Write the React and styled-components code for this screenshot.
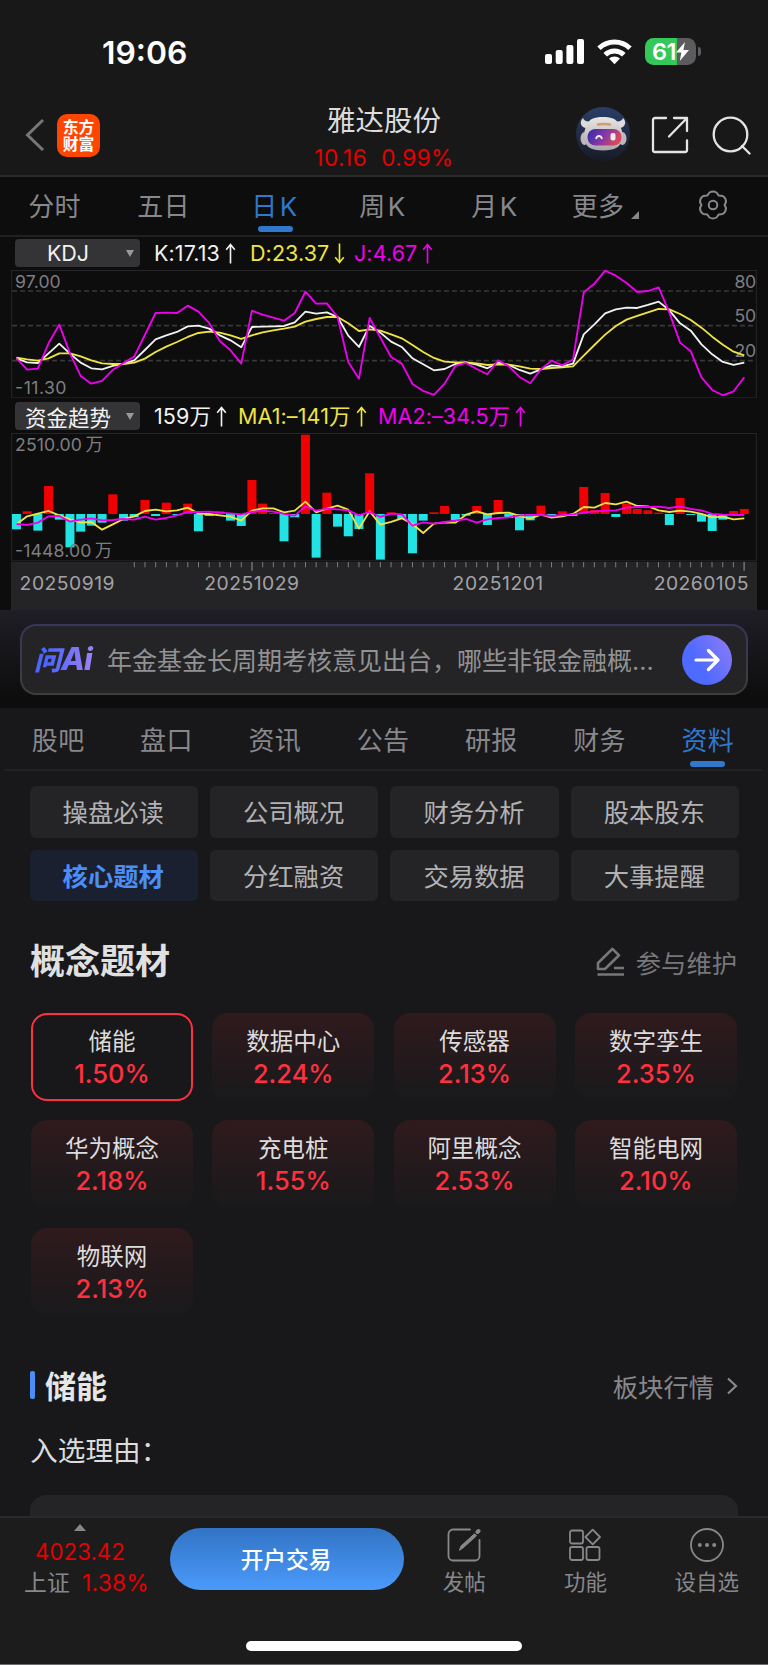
import React from 'react'
import styled, { createGlobalStyle, css } from 'styled-components'

const palette = {
    red: '#e60000',
    rose: '#ff3040',
    blue: '#2f78cc',
    brightBlue: '#4b8ef8',
    yellow: '#f0e442',
    pink: '#f000f0',
    cyan: '#22e3e3',
    grey: '#88888c',
    panel: '#242426',
}

// the charts use three units for each pixel
const STEP = 32.12
const FIRST = 16
const cx = i => FIRST + i * STEP

const kLine = [370, 382, 384, 355, 326, 356, 383, 400, 403, 393, 386, 376, 345, 313, 301, 291, 274, 272, 281, 301, 316, 337, 276, 275, 274, 273, 262, 230, 236, 232, 246, 302, 336, 272, 293, 320, 336, 370, 388, 406, 402, 387, 382, 389, 400, 383, 390, 405, 416, 403, 391, 394, 386, 298, 268, 235, 223, 218, 219, 210, 200, 226, 265, 287, 328, 358, 381, 390, 383]
const dLine = [368, 373, 377, 370, 355, 355, 364, 376, 385, 387, 387, 383, 371, 351, 335, 321, 306, 294, 290, 293, 301, 312, 301, 292, 286, 281, 275, 260, 252, 246, 246, 265, 288, 283, 287, 298, 310, 330, 351, 369, 380, 382, 382, 385, 390, 388, 389, 394, 401, 402, 399, 397, 394, 362, 330, 299, 273, 254, 243, 232, 222, 223, 237, 255, 278, 305, 329, 350, 361]
const jLine = [370, 404, 401, 325, 269, 355, 423, 446, 438, 405, 384, 365, 300, 234, 233, 234, 212, 230, 264, 318, 346, 386, 227, 239, 248, 257, 234, 170, 206, 205, 246, 381, 431, 249, 308, 366, 386, 447, 468, 480, 446, 393, 384, 402, 418, 376, 394, 426, 445, 403, 377, 391, 373, 172, 146, 107, 122, 144, 171, 168, 157, 233, 323, 349, 427, 465, 481, 469, 427]

const flows = [-46, 8, -50, 84, -17, -100, -53, -35, -26, 59, -20, -10, 42, -6, 34, -3, 31, -52, -6, 8, -20, -36, 102, 31, 3, -82, -10, 238, -131, 64, -38, -67, -45, 122, -137, 5, -15, -118, -20, 5, 24, -18, -5, 24, -33, 42, -12, -49, -19, 25, -3, 8, -6, 81, 12, 63, -9, 31, 15, 11, 4, -33, 48, -3, -23, -51, -17, 9, 15]
const ma1 = [389, 365, 357, 349, 362, 374, 384, 382, 405, 389, 373, 365, 349, 345, 350, 347, 339, 357, 358, 362, 366, 378, 348, 341, 341, 353, 348, 321, 353, 342, 333, 345, 402, 350, 390, 382, 371, 388, 415, 387, 383, 384, 360, 350, 359, 355, 354, 364, 372, 360, 369, 365, 358, 337, 339, 325, 329, 321, 334, 335, 347, 352, 348, 351, 358, 368, 366, 374, 371]
const ma2 = [388, 391, 384, 365, 364, 381, 375, 371, 377, 376, 373, 375, 366, 375, 370, 362, 352, 352, 351, 354, 356, 359, 352, 348, 351, 358, 363, 335, 348, 342, 344, 347, 362, 352, 367, 357, 359, 393, 383, 387, 382, 378, 373, 384, 374, 370, 368, 362, 361, 361, 364, 361, 359, 354, 350, 348, 347, 339, 337, 337, 336, 340, 335, 343, 347, 358, 360, 361, 361]

const toPoints = (values, top) => values.map((v, i) => `${cx(i)},${v - top}`).join(' ')

const infoTabs = ['股吧', '盘口', '资讯', '公告', '研报', '财务', '资料']
const chips = ['操盘必读', '公司概况', '财务分析', '股本股东', '核心题材', '分红融资', '交易数据', '大事提醒']
const concepts = [
    ['储能', '1.50%'],
    ['数据中心', '2.24%'],
    ['传感器', '2.13%'],
    ['数字孪生', '2.35%'],
    ['华为概念', '2.18%'],
    ['充电桩', '1.55%'],
    ['阿里概念', '2.53%'],
    ['智能电网', '2.10%'],
    ['物联网', '2.13%'],
]

export default function App() {
    return (
        <>
            <GlobalStyle />
            <Screen>
                <StatusBar />
                <Header />
                <PeriodBar />
                <Charts />
                <AskBar />
                <InfoTabs>
                    {infoTabs.map(name => (
                        <InfoTab key={name} $active={name === '资料'}>{name}</InfoTab>
                    ))}
                </InfoTabs>
                <Content>
                    <ChipGrid>
                        {chips.map(name => (
                            <Chip key={name} $active={name === '核心题材'}>{name}</Chip>
                        ))}
                    </ChipGrid>
                    <SectionHead>
                        <BigTitle>概念题材</BigTitle>
                        <SectionLink>
                            <EditIcon />
                            参与维护
                        </SectionLink>
                    </SectionHead>
                    <ConceptGrid>
                        {concepts.map(([name, rate], i) => (
                            <Concept key={name} $active={i === 0}>
                                <ConceptName>{name}</ConceptName>
                                <ConceptRate>{rate}</ConceptRate>
                            </Concept>
                        ))}
                    </ConceptGrid>
                    <TopicHead>
                        <TopicTitle>储能</TopicTitle>
                        <TopicLink>
                            板块行情
                            <svg width="12" height="18" viewBox="0 0 12 18" fill="none" stroke="#88888c" strokeWidth="2.200">
                                <path d="M2 1.5 10 9 2 16.5" />
                            </svg>
                        </TopicLink>
                    </TopicHead>
                    <Reason>入选理由：</Reason>
                    <ReasonPanel />
                </Content>
                <BottomBar />
            </Screen>
        </>
    )
}

function StatusBar() {
    return (
        <Status>
            <Clock>19:06</Clock>
            <StatusIcons>
                <svg width="40" height="25" viewBox="0 0 40 25" fill="#fff">
                    <rect x="0" y="15" width="7" height="10" rx="2" />
                    <rect x="10.7" y="11" width="7" height="14" rx="2" />
                    <rect x="21.4" y="6" width="7" height="19" rx="2" />
                    <rect x="32" y="0" width="7" height="25" rx="2" />
                </svg>
                <svg width="35" height="26" viewBox="0 0 35 26" fill="none" stroke="#fff" strokeWidth="5">
                    <path d="M2 9.3a22.5 22.5 0 0 1 31 0" />
                    <path d="M8.2 15.7a13.3 13.3 0 0 1 18.6 0" />
                    <path d="M12 19.6a8 8 0 0 1 11 0L17.5 25.3z" fill="#fff" stroke="none" />
                </svg>
                <Battery>
                    <span>61</span>
                    <svg width="13" height="19" viewBox="0 0 13 19" fill="#fff">
                        <path d="M9 0 0 10.6h5.4L3.8 19 13 8H7.4z" />
                    </svg>
                </Battery>
                <BatteryTip />
            </StatusIcons>
        </Status>
    )
}

function Header() {
    return (
        <HeaderBar>
            <HeaderLeft>
                <svg width="20" height="34" viewBox="0 0 20 34" fill="none" stroke="#77777a" strokeWidth="3">
                    <path d="M18 2 2.500 17 18 32" />
                </svg>
                <Brand><span>东方</span><span>财富</span></Brand>
            </HeaderLeft>
            <Stock>
                <StockName>雅达股份</StockName>
                <StockPrice><span>10.16</span><span>0.99%</span></StockPrice>
            </Stock>
            <HeaderRight>
                <Robot />
                <svg width="38" height="38" viewBox="0 0 38 38" fill="none" stroke="#e4e4e4" strokeWidth="2.300" strokeLinecap="round" strokeLinejoin="round">
                    <path d="M15 2H4a2 2 0 0 0-2 2v30a2 2 0 0 0 2 2h30a2 2 0 0 0 2-2V24.500" />
                    <path d="M23 2h13v13M36 2 18 20.500" />
                </svg>
                <svg width="39" height="39" viewBox="0 0 39 39" fill="none" stroke="#e4e4e4" strokeWidth="2.300" strokeLinecap="round">
                    <circle cx="18.500" cy="18.500" r="16.800" />
                    <path d="m30 30 7.500 7.500" />
                </svg>
            </HeaderRight>
        </HeaderBar>
    )
}

function Robot() {
    return (
        <svg width="54" height="54" viewBox="0 0 54 54">
            <defs>
                <linearGradient id="night" x1="0" y1="0" x2="0" y2="1">
                    <stop offset="0" stopColor="#2b3e68" />
                    <stop offset="1" stopColor="#171b26" />
                </linearGradient>
                <linearGradient id="visor" x1="0" y1="0" x2="1" y2="0.300">
                    <stop offset="0" stopColor="#3128a8" />
                    <stop offset="0.550" stopColor="#8338a8" />
                    <stop offset="1" stopColor="#d8485c" />
                </linearGradient>
                <linearGradient id="shell" x1="0" y1="0" x2="0" y2="1">
                    <stop offset="0" stopColor="#e8e6e4" />
                    <stop offset="1" stopColor="#aaa5a9" />
                </linearGradient>
            </defs>
            <circle cx="27" cy="27" r="27" fill="url(#night)" />
            <path d="M7 11c-3.500 3-3 9 3 10l6-7c-5 1-8 0-9-3zM47 11c3.500 3 3 9-3 10l-6-7c5 1 8 0 9-3z" fill="#dedbdc" />
            <ellipse cx="8.500" cy="31.500" rx="4" ry="6.500" fill="#bdb8bc" />
            <ellipse cx="46.500" cy="31.500" rx="4" ry="6.500" fill="#bdb8bc" />
            <path d="M11 18c2-6 7-8 16-8s14 2 16 8c3 4 4 8 3 14-1 8-7 11.500-19 11.500S9.500 40 8.500 32c-.8-6 0-10 2.500-14z" fill="url(#shell)" />
            <path d="M21 17.800c4-1 9-1 14 0" stroke="#d89a6c" strokeWidth="2.500" fill="none" />
            <rect x="11.500" y="22" width="34" height="16.500" rx="8" fill="url(#visor)" />
            <path d="M20 32c1-4 5-4 6 0" stroke="#eee" strokeWidth="1.800" fill="none" />
            <rect x="34.500" y="26" width="5" height="7.500" rx="2" fill="#eee" />
        </svg>
    )
}

function PeriodBar() {
    return (
        <Periods>
            <Period>分时</Period>
            <Period>五日</Period>
            <Period $active $mixed>日K</Period>
            <Period $mixed>周K</Period>
            <Period $mixed>月K</Period>
            <Period>更多<Corner /></Period>
            <Period>
                <svg width="30" height="30" viewBox="0 0 30 30" fill="none" stroke="#88888c" strokeWidth="2" strokeLinejoin="round">
                    <path d="M11.500 2.500Q15 .5 18.500 2.500L20.800 5.600 24.800 6Q28 8 28 12L26.600 15 28 18Q28 22 24.800 24L20.800 24.400 18.500 27.500Q15 29.500 11.500 27.500L9.200 24.400 5.200 24Q2 22 2 18L3.400 15 2 12Q2 8 5.200 6L9.200 5.600z" />
                    <circle cx="15" cy="15" r="4.300" />
                </svg>
            </Period>
        </Periods>
    )
}

function Arrow({ down }) {
    return (
        <ArrowSvg viewBox="0 0 11 22" $down={down}>
            <path d="M5.500 21.500V2M1 7l4.500-5.500L10 7" fill="none" stroke="currentColor" strokeWidth="1.700" />
        </ArrowSvg>
    )
}

function Charts() {
    return (
        <ChartArea>
            <Legend>
                <Picker>KDJ</Picker>
                <Reading $color="#f2f2f2" $width={96}>K:17.13<Arrow /></Reading>
                <Reading $color={palette.yellow} $width={104}>D:23.37<Arrow down /></Reading>
                <Reading $color={palette.pink}>J:4.67<Arrow /></Reading>
            </Legend>
            <Plot viewBox="0 0 2238 385" height="128.3">
                <rect x="1.500" y="1.500" width="2235" height="382" fill="none" stroke="#262628" strokeWidth="3" />
                {[63, 167, 272].map(y => (
                    <line key={y} x1="3" x2="2235" y1={y} y2={y} stroke="#38383a" strokeWidth="5" strokeDasharray="15 9" />
                ))}
                <Scale x="12" y="53" textLength="137">97.00</Scale>
                <Scale x="12" y="373" textLength="154">-11.30</Scale>
                <Scale x="2171" y="53" textLength="65">80</Scale>
                <Scale x="2171" y="155" textLength="65">50</Scale>
                <Scale x="2171" y="260" textLength="65">20</Scale>
                <Line points={toPoints(kLine, 105)} stroke="#f2f2f2" />
                <Line points={toPoints(dLine, 105)} stroke={palette.yellow} />
                <Line points={toPoints(jLine, 105)} stroke={palette.pink} />
            </Plot>
            <Legend $tall>
                <Picker>资金趋势</Picker>
                <Reading $color="#f2f2f2" $width={84}>159万<Arrow /></Reading>
                <Reading $color={palette.yellow} $width={140}>MA1:–141万<Arrow /></Reading>
                <Reading $color={palette.pink}>MA2:–34.5万<Arrow /></Reading>
            </Legend>
            <Plot viewBox="0 0 2238 385" height="128.3">
                <rect x="1.500" y="1.500" width="2235" height="382" fill="none" stroke="#262628" strokeWidth="3" />
                {flows.map((v, i) => (
                    <rect
                        key={i}
                        x={cx(i) - 13.500}
                        y={v > 0 ? 243 - v : 243}
                        width="27"
                        height={Math.abs(v)}
                        fill={v > 0 ? '#f00000' : palette.cyan}
                    />
                ))}
                <Scale x="12" y="54" textLength="264">2510.00{'\u2009'}万</Scale>
                <Scale x="12" y="372" textLength="292">-1448.00{'\u2009'}万</Scale>
                <Line points={toPoints(ma1, 115)} stroke={palette.yellow} />
                <Line points={toPoints(ma2, 115)} stroke={palette.pink} />
            </Plot>
            <Plot viewBox="0 0 2238 145" height="48.3" $fill>
                {flows.map((v, i) => i > 10 && (
                    <line key={i} x1={cx(i)} x2={cx(i)} y1="0" y2={i % 23 === 22 ? 26 : 16} stroke="#7c7c80" strokeWidth={i % 23 === 22 ? 4 : 3} />
                ))}
                <DateText x="25" y="83" textLength="285">20250919</DateText>
                <DateText x="579" y="83" textLength="285">20251029</DateText>
                <DateText x="1325" y="83" textLength="272">20251201</DateText>
                <DateText x="1929" y="83" textLength="284">20260105</DateText>
            </Plot>
        </ChartArea>
    )
}

function AskBar() {
    return (
        <AskArea>
            <AskBox>
                <AskLogo>问<b>Ai</b></AskLogo>
                <AskText>年金基金长周期考核意见出台，哪些非银金融概...</AskText>
                <AskButton>
                    <svg width="26" height="24" viewBox="0 0 26 24" fill="none" stroke="#fff" strokeWidth="3.200" strokeLinecap="round" strokeLinejoin="round">
                        <path d="M2 12h22M14.500 2.500 24 12l-9.500 9.500" />
                    </svg>
                </AskButton>
            </AskBox>
        </AskArea>
    )
}

function EditIcon() {
    return (
        <svg width="29" height="29" viewBox="0 0 29 29" fill="none" stroke="#77777a" strokeWidth="2.600" strokeLinejoin="round">
            <path d="M2 22v-6L16.500 1.800l6.500 6.500L9 22z" />
            <path d="M18 21h10M1.500 27.500H28" />
        </svg>
    )
}

function BottomBar() {
    return (
        <Footer>
            <FooterRow>
                <IndexBox>
                    <UpMark />
                    <IndexValue>4023.42</IndexValue>
                    <IndexRow>上证 <em>1.38%</em></IndexRow>
                </IndexBox>
                <TradeButton>开户交易</TradeButton>
                <Action>
                    <svg width="34" height="34" viewBox="0 0 34 34" fill="none" stroke="#88888c" strokeWidth="1.800" strokeLinecap="round">
                        <path d="M23 1.500H6A4.500 4.500 0 0 0 1.500 6v22A4.500 4.500 0 0 0 6 32.500h22a4.500 4.500 0 0 0 4.500-4.500V12" />
                        <path d="M12.500 22 14 18 27.500 5.800l2 2L16 20z" fill="#88888c" strokeWidth="1" />
                        <path d="m30.500 4 1-1" strokeWidth="4" />
                    </svg>
                    发帖
                </Action>
                <Action>
                    <svg width="34" height="34" viewBox="0 0 34 34" fill="none" stroke="#88888c" strokeWidth="1.800" strokeLinejoin="round">
                        <rect x="2" y="2.500" width="13" height="13" rx="2" />
                        <path d="m24.700 1.600 7.300 7.400-7.300 7.400L17.400 9z" />
                        <rect x="2" y="19" width="13" height="13" rx="2" />
                        <rect x="18.500" y="19" width="13" height="13" rx="2" />
                    </svg>
                    功能
                </Action>
                <Action>
                    <svg width="34" height="34" viewBox="0 0 34 34" fill="none" stroke="#88888c" strokeWidth="1.800">
                        <circle cx="17" cy="17" r="16" />
                        <g fill="#88888c" stroke="none">
                            <circle cx="9.800" cy="17" r="2" />
                            <circle cx="17" cy="17" r="2" />
                            <circle cx="24.200" cy="17" r="2" />
                        </g>
                    </svg>
                    设自选
                </Action>
            </FooterRow>
            <HomeBar />
        </Footer>
    )
}


const GlobalStyle = createGlobalStyle`
    * { box-sizing: border-box; }
    body {
        margin: 0;
        background: #18181a;
        font-family: Inter, "Noto Sans CJK SC", sans-serif;
    }
    svg { display: block; flex: none; }
`

const Screen = styled.div`
    width: 768px;
    height: 1665px;
    display: flex;
    flex-direction: column;
    overflow: hidden;
    color: #dcdcdc;
`

const Status = styled.div`
    height: 94px;
    flex: none;
    display: flex;
    justify-content: space-between;
    padding: 33px 67px 0 102px;
    background: #181818;
`

const Clock = styled.div`
    font-size: 31.800px;
    line-height: 39px;
    font-weight: 600;
    color: #fff;
`

const StatusIcons = styled.div`
    height: 37px;
    display: flex;
    align-items: center;
    gap: 12px;
`

const Battery = styled.div`
    width: 51px;
    height: 27px;
    border-radius: 8.500px;
    display: flex;
    align-items: center;
    justify-content: center;
    margin-left: 1px;
    background: linear-gradient(90deg, #34c759 62%, #5c5c5e 62%);
    color: #fff;
    font-size: 23.500px;
    font-weight: 600;
    letter-spacing: -.5px;
`

const BatteryTip = styled.div`
    width: 3px;
    height: 9px;
    margin-left: -10px;
    border-radius: 0 3px 3px 0;
    background: #5c5c5e;
`

const HeaderBar = styled.header`
    height: 83px;
    flex: none;
    display: grid;
    grid-template-columns: 1fr 180px 1fr;
    background: #181818;
    border-bottom: 2px solid #2b2b2d;
`

const HeaderLeft = styled.div`
    display: flex;
    align-items: center;
    gap: 12px;
    padding: 1px 0 0 25px;
`

const Brand = styled.div`
    width: 43px;
    height: 43px;
    display: flex;
    flex-direction: column;
    align-items: center;
    justify-content: center;
    border-radius: 10px;
    background: #ff4502;
    color: #fff;
    font: 700 15.800px/17.500px "Noto Sans CJK SC", sans-serif;
`

const Stock = styled.div`
    display: flex;
    flex-direction: column;
    align-items: center;
    padding-top: 10px;
`

const StockName = styled.div`
    font-size: 28.500px;
    line-height: 34px;
`

const StockPrice = styled.div`
    display: flex;
    gap: 14px;
    margin-top: 6px;
    font-size: 22.500px;
    line-height: 28px;
    letter-spacing: .5px;
    color: ${palette.red};
`

const HeaderRight = styled.div`
    display: flex;
    align-items: center;
    justify-content: flex-end;
    gap: 23px;
    padding: 1px 17px 0 0;

    & > :first-child {
        margin: -2px -2px 0 0;
    }
`

const Periods = styled.nav`
    height: 60px;
    flex: none;
    display: grid;
    grid-template-columns: 109px 109px 115px 101px 123px 91px 1fr;
    background: #0d0d0d;
    border-bottom: 2px solid #202022;

    & > :last-child {
        padding-left: 9px;
    }
`

const underline = css`
    color: ${palette.blue};

    &::after {
        content: '';
        position: absolute;
        bottom: 3px;
        width: 35px;
        height: 6px;
        border-radius: 3px;
        background: ${palette.blue};
    }
`

const Period = styled.div`
    position: relative;
    display: flex;
    align-items: center;
    justify-content: center;
    padding-bottom: 3px;
    font-size: 26px;
    letter-spacing: ${props => props.$mixed ? '2.500px' : '.3px'};
    color: ${palette.grey};
    ${props => props.$active && underline}
`

const Corner = styled.i`
    border-left: 8px solid transparent;
    border-bottom: 8px solid ${palette.grey};
    margin: 21px -6px 0 7px;
`

const ChartArea = styled.section`
    height: 373px;
    flex: none;
    padding: 0 11px;
    background: #0d0d0d;
    overflow: hidden;
`

const Legend = styled.div`
    height: ${props => props.$tall ? '35px' : '33px'};
    display: flex;
    align-items: center;
    padding-left: 4px;
    padding-bottom: ${props => props.$tall ? 0 : '1px'};
    padding-top: ${props => props.$tall ? '1px' : 0};
`

const Picker = styled.div`
    width: 125px;
    height: 28px;
    display: flex;
    align-items: center;
    justify-content: center;
    position: relative;
    margin-right: 14px;
    padding-right: 19px;
    border-radius: 4px;
    background: #343436;
    color: #f2f2f2;
    font-size: 21.500px;

    &::after {
        content: '';
        position: absolute;
        right: 6px;
        border: 4px solid transparent;
        border-top: 7px solid #99999d;
        border-bottom: 0;
    }
`

const Reading = styled.div`
    width: ${props => props.$width ? props.$width + 'px' : 'auto'};
    display: flex;
    align-items: center;
    gap: 5px;
    white-space: nowrap;
    font-size: 21.500px;
    line-height: 28px;
    letter-spacing: .1px;
    color: ${props => props.$color};
`

const ArrowSvg = styled.svg`
    width: 11px;
    height: 21px;
    transform: ${props => props.$down ? 'rotate(180deg)' : 'none'};
`

const Plot = styled.svg`
    width: 746px;
    background: ${props => props.$fill ? palette.panel : 'transparent'};
`

const Line = styled.polyline`
    fill: none;
    stroke-width: 5.500;
    stroke-linejoin: round;
`

const Scale = styled.text`
    font-size: 53px;
    fill: #7e7e82;
`

const DateText = styled.text`
    font-size: 58px;
    fill: #a2a2a5;
`

const AskArea = styled.section`
    height: 98px;
    flex: none;
    padding: 14px 20px 0;
    background: linear-gradient(#1f1e26, #0d0d0d 90%);
`

const AskBox = styled.div`
    height: 71px;
    display: flex;
    align-items: center;
    padding: 0 14px 0 12px;
    border: 2px solid transparent;
    border-radius: 16px;
    background: linear-gradient(${palette.panel}, ${palette.panel}) padding-box, linear-gradient(#37365f, #3f3c3a) border-box;
`

const AskLogo = styled.div`
    width: 73px;
    font-size: 27px;
    line-height: 32px;
    font-weight: 900;
    font-style: italic;
    white-space: nowrap;
    background: linear-gradient(90deg, #4b66ff 20%, #9d80f5 80%);
    background-clip: text;
    color: transparent;

    b {
        font-size: 31px;
        font-weight: 800;
        letter-spacing: -1px;
    }
`

const AskText = styled.div`
    flex: 1;
    padding-bottom: 2px;
    font-size: 25px;
    white-space: nowrap;
    color: #929294;
`

const AskButton = styled.div`
    width: 50px;
    height: 50px;
    display: flex;
    align-items: center;
    justify-content: center;
    border-radius: 50%;
    background: linear-gradient(60deg, #4e6aff 35%, #907df6);
`

const InfoTabs = styled.nav`
    height: 63px;
    flex: none;
    display: grid;
    grid-template-columns: repeat(7, 1fr);
    margin: 0 6px 0 4px;
    border-bottom: 2px solid #212123;
`

const InfoTab = styled(Period)`
    padding-bottom: 1px;

    &::after {
        bottom: 2px;
    }
`

const Content = styled.main`
    height: 745px;
    flex: none;
    padding: 15px 30px 0;
    overflow: hidden;
`

const ChipGrid = styled.div`
    display: grid;
    grid-template-columns: repeat(4, 168.400px);
    gap: 12px;
    margin-left: -.5px;
`

const Chip = styled.div`
    height: 51.500px;
    display: flex;
    align-items: center;
    justify-content: center;
    padding: 0 1px 1px 0;
    border-radius: 6px;
    font-size: 25.300px;
    background: ${props => props.$active ? '#1b2030' : palette.panel};
    color: ${props => props.$active ? palette.brightBlue : '#b2b2b4'};
    font-weight: ${props => props.$active ? 700 : 400};
`

const SectionHead = styled.div`
    height: 52px;
    display: flex;
    align-items: center;
    justify-content: space-between;
    margin-top: 31px;
`

const BigTitle = styled.h2`
    margin: 0;
    font-size: 35px;
    font-weight: 700;
    color: #e0e0e0;
`

const SectionLink = styled.div`
    display: flex;
    align-items: center;
    gap: 11px;
    padding: 7px 1px 0 0;
    font-size: 25.300px;
    color: #77777a;
`

const ConceptGrid = styled.div`
    display: grid;
    grid-template-columns: repeat(4, 162px);
    gap: 19.300px;
    margin: 29px 0 0 1px;
`

const Concept = styled.div`
    height: 88px;
    display: flex;
    flex-direction: column;
    align-items: center;
    padding-top: ${props => props.$active ? '10px' : '12px'};
    border-radius: 16px;
    background: ${props => props.$active ? 'none' : 'linear-gradient(#2f1a1d, #19191b)'};
    border: ${props => props.$active ? `2px solid ${palette.rose}` : 'none'};
`

const ConceptName = styled.div`
    font-size: 23.500px;
    line-height: 33px;
`

const ConceptRate = styled.div`
    font-size: 25.500px;
    line-height: 32px;
    font-weight: 500;
    color: ${palette.rose};
`

const TopicHead = styled.div`
    height: 40px;
    display: flex;
    align-items: center;
    justify-content: space-between;
    margin-top: 49px;
`

const TopicTitle = styled.h3`
    margin: 0;
    display: flex;
    align-items: center;
    gap: 10px;
    font-size: 31px;
    font-weight: 700;
    color: #e6e6e6;

    &::before {
        content: '';
        width: 5px;
        height: 28px;
        border-radius: 2px;
        background: ${palette.brightBlue};
    }
`

const TopicLink = styled(SectionLink)`
    gap: 12px;
    padding: 2px 0 0;
    color: #88888c;
`

const Reason = styled.div`
    margin-top: 26px;
    font-size: 27.700px;
    line-height: 40px;
`

const ReasonPanel = styled.div`
    height: 60px;
    margin-top: 24px;
    border-radius: 16px;
    background: ${palette.panel};
`

const Footer = styled.footer`
    height: 149px;
    flex: none;
    background: #1c1c1c;
    border-top: 2px solid #2a2a2c;
    border-bottom: 1px solid #6c6c6e;
`

const FooterRow = styled.div`
    height: 88px;
    display: flex;
    padding-top: 10px;
`

const IndexBox = styled.div`
    width: 170px;
    display: flex;
    flex-direction: column;
    align-items: center;
    padding-right: 10px;
    margin-top: -4px;
`

const UpMark = styled.i`
    border: 6.500px solid transparent;
    border-bottom: 7px solid #88888c;
    border-top: 0;
`

const IndexValue = styled.div`
    margin-top: 7px;
    font-size: 22.300px;
    line-height: 28px;
    color: ${palette.red};
`

const IndexRow = styled.div`
    margin-top: 2px;
    padding-left: 13px;
    font-size: 22.800px;
    line-height: 30px;
    white-space: nowrap;
    color: ${palette.grey};

    em {
        margin-left: 6px;
        font-style: normal;
        letter-spacing: .2px;
        color: ${palette.red};
    }
`

const TradeButton = styled.div`
    width: 234px;
    height: 62px;
    display: flex;
    align-items: center;
    justify-content: center;
    padding: 0 2px 2px 0;
    border-radius: 31px;
    font-size: 22.700px;
    font-weight: 500;
    color: #fff;
    background: linear-gradient(#3174c4, #4b9afb);
`

const Action = styled.div`
    width: 121.300px;
    display: flex;
    flex-direction: column;
    align-items: center;
    gap: 4px;
    padding-right: 1px;
    font-size: 21.500px;
    line-height: 32px;
    color: ${palette.grey};
`

const HomeBar = styled.div`
    width: 276px;
    height: 10px;
    margin: 35px auto 0;
    border-radius: 5px;
    background: #fff;
`
